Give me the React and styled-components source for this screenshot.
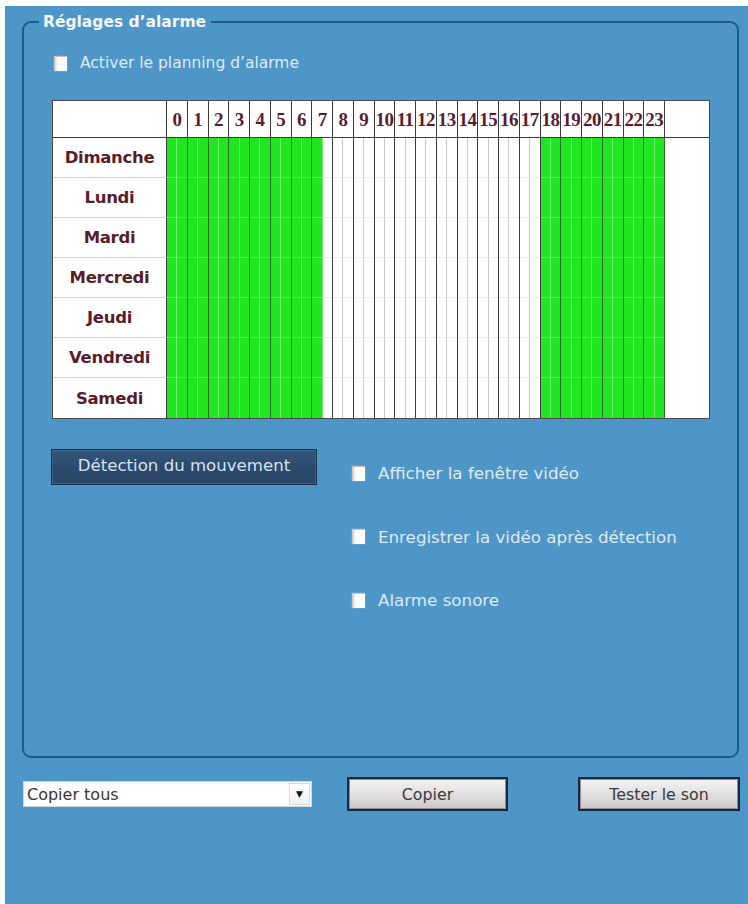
import React from "react";
import styled, { createGlobalStyle } from "styled-components";

const GlobalStyle = createGlobalStyle`
  html, body { margin: 0; padding: 0; background: #ffffff; }
  body { font-family: "DejaVu Sans", "Liberation Sans", sans-serif; }
  * { box-sizing: border-box; }
`;

const Page = styled.div`
  padding: 6px 0 0 5px;
  width: 748px;
  height: 904px;
  overflow: hidden;
`;

const BluePanel = styled.div`
  display: flex;
  flex-direction: column;
  width: 743px;
  height: 898px;
  background: #4e96c8;
`;

const Fieldset = styled.fieldset`
  margin: 6px 0 0 17px;
  padding: 0;
  width: 717px;
  height: 746px;
  border: 2px solid #1d5a90;
  border-radius: 9px;
  min-width: 0;
`;

const Legend = styled.legend`
  margin-left: 15px;
  padding: 0 5px 0 4px;
  font-family: "DejaVu Sans", sans-serif;
  font-weight: bold;
  font-size: 15.5px;
  line-height: 20px;
  color: #f3f8fc;
`;

const Content = styled.div`
  display: flex;
  flex-direction: column;
  padding: 21px 0 0 28px;
`;

const OptionRow = styled.label`
  display: flex;
  align-items: center;
  gap: 13px;
  height: 20px;
  margin-left: ${(p) => p.$indent || 0}px;
  font-size: ${(p) => p.$size || 15.5}px;
  color: #dde9f4;
  white-space: nowrap;
`;

const Box = styled.span`
  display: inline-block;
  width: 13px;
  height: 15px;
  flex: none;
  background: linear-gradient(to right, #b9b9b9 0, #e9e9e9 2px, #fbfbfb 4px, #ffffff 100%);
  border-top: 1px solid #d9b8b0;
  box-shadow: 0 0 1px rgba(255, 255, 255, 0.6);
`;

const Schedule = styled.div`
  margin-top: 27px;
  width: 658px;
  border: 1px solid #4a4a4a;
  background: #ffffff;
`;

const GridRow = styled.div`
  display: grid;
  grid-template-columns: 114px repeat(24, 1fr) 44px;
  height: ${(p) => (p.$header ? 37 : 40)}px;
  border-bottom: ${(p) => (p.$header ? "1px solid #3c3c3c" : "none")};
`;

const LabelCell = styled.div`
  display: flex;
  align-items: center;
  justify-content: center;
  border-right: 1px solid #3c3c3c;
  border-bottom: ${(p) => (p.$last ? "none" : "1px solid #d2d2d2")};
  font-family: "DejaVu Sans", sans-serif;
  font-weight: bold;
  font-size: 16.5px;
  letter-spacing: -0.3px;
  color: #5b1b29;
`;

const HourHead = styled.div`
  display: flex;
  align-items: center;
  justify-content: center;
  border-right: 1px solid #3c3c3c;
  font-family: "Liberation Serif", "DejaVu Serif", serif;
  font-weight: bold;
  font-size: 19px;
  letter-spacing: -0.5px;
  color: #5a1d2d;
  white-space: nowrap;
  overflow: visible;
  padding-top: 2px;
`;

const HourCell = styled.div`
  display: flex;
  border-right: 1px solid ${(p) => (p.$on ? "#2f6a2f" : "#3c3c3c")};
`;

const Half = styled.div`
  flex: 1;
  background: ${(p) => (p.$on ? "#1fe61f" : "#ffffff")};
  border-right: ${(p) =>
    p.$first ? `1px solid ${p.$on ? "#74ef74" : "#c9c9c9"}` : "none"};
  border-bottom: ${(p) =>
    p.$last ? "none" : `1px solid ${p.$on ? "#55ea55" : "#ececec"}`};
`;

const BlankCell = styled.div`
  background: #ffffff;
`;

const LowerSection = styled.div`
  display: flex;
  margin-top: 30px;
`;

const MotionButton = styled.button`
  width: 266px;
  height: 36px;
  margin-left: -1px;
  padding: 0 0 3px;
  border: 1px solid #1a2f4c;
  background: linear-gradient(#34557a, #2c4a6d 50%, #2a4566);
  box-shadow: inset 0 0 0 1px #3f618a;
  color: #d2e3f2;
  font-family: "DejaVu Sans", sans-serif;
  font-size: 16.6px;
`;

const OptionColumn = styled.div`
  display: flex;
  flex-direction: column;
  gap: 43.5px;
  margin: 14px 0 0 35px;
`;

const BottomBar = styled.div`
  display: flex;
  align-items: center;
  height: 34px;
  margin-top: 19px;
  padding-left: 18px;
`;

const SelectBox = styled.div`
  display: flex;
  align-items: center;
  width: 289px;
  height: 26px;
  background: #ffffff;
  border: 1px solid #c8d6e2;
  margin-right: 35px;
`;

const SelectText = styled.span`
  flex: 1;
  padding-left: 3px;
  font-size: 16px;
  color: #3a3530;
`;

const SelectArrow = styled.span`
  display: flex;
  align-items: center;
  justify-content: center;
  width: 21px;
  height: 22px;
  margin-right: 1px;
  border: 1px solid #d8d8d8;
  background: linear-gradient(#ffffff, #f1f1f1);
  font-size: 9px;
  color: #111;
`;

const GrayButton = styled.button`
  width: ${(p) => p.$w}px;
  height: 34px;
  margin-right: ${(p) => p.$mr || 0}px;
  padding: 0;
  border: 2px solid #172847;
  background: linear-gradient(#f4f2f2, #e2e0e0 50%, #c9c7c7);
  box-shadow: inset 0 0 0 1px #8d8d96;
  color: #3a3a3a;
  font-family: "DejaVu Sans", sans-serif;
  font-size: 15.8px;
`;

const days = ["Dimanche", "Lundi", "Mardi", "Mercredi", "Jeudi", "Vendredi", "Samedi"];
const hours = Array.from({ length: 24 }, (_, i) => i);
const isOn = (halfIndex) => halfIndex < 15 || halfIndex >= 36;

export default function App() {
  return (
    <>
      <GlobalStyle />
      <Page>
        <BluePanel>
          <Fieldset>
            <Legend>Réglages d’alarme</Legend>
            <Content>
              <OptionRow $indent={2}>
                <Box />
                Activer le planning d’alarme
              </OptionRow>

              <Schedule>
                <GridRow $header>
                  <LabelCell $last />
                  {hours.map((h) => (
                    <HourHead key={h}>{h}</HourHead>
                  ))}
                  <BlankCell />
                </GridRow>
                {days.map((d, di) => (
                  <GridRow key={d}>
                    <LabelCell $last={di === days.length - 1}>{d}</LabelCell>
                    {hours.map((h) => {
                      const a = isOn(h * 2);
                      const b = isOn(h * 2 + 1);
                      const last = di === days.length - 1;
                      return (
                        <HourCell key={h} $on={a && b}>
                          <Half $first $on={a} $last={last} />
                          <Half $on={b} $last={last} />
                        </HourCell>
                      );
                    })}
                    <BlankCell />
                  </GridRow>
                ))}
              </Schedule>

              <LowerSection>
                <MotionButton>Détection du mouvement</MotionButton>
                <OptionColumn>
                  <OptionRow $size={16.7}>
                    <Box />
                    Afficher la fenêtre vidéo
                  </OptionRow>
                  <OptionRow $size={16.7}>
                    <Box />
                    Enregistrer la vidéo après détection
                  </OptionRow>
                  <OptionRow $size={16.7}>
                    <Box />
                    Alarme sonore
                  </OptionRow>
                </OptionColumn>
              </LowerSection>
            </Content>
          </Fieldset>

          <BottomBar>
            <SelectBox>
              <SelectText>Copier tous</SelectText>
              <SelectArrow>▼</SelectArrow>
            </SelectBox>
            <GrayButton $w={161} $mr={70}>Copier</GrayButton>
            <GrayButton $w={162}>Tester le son</GrayButton>
          </BottomBar>
        </BluePanel>
      </Page>
    </>
  );
}
